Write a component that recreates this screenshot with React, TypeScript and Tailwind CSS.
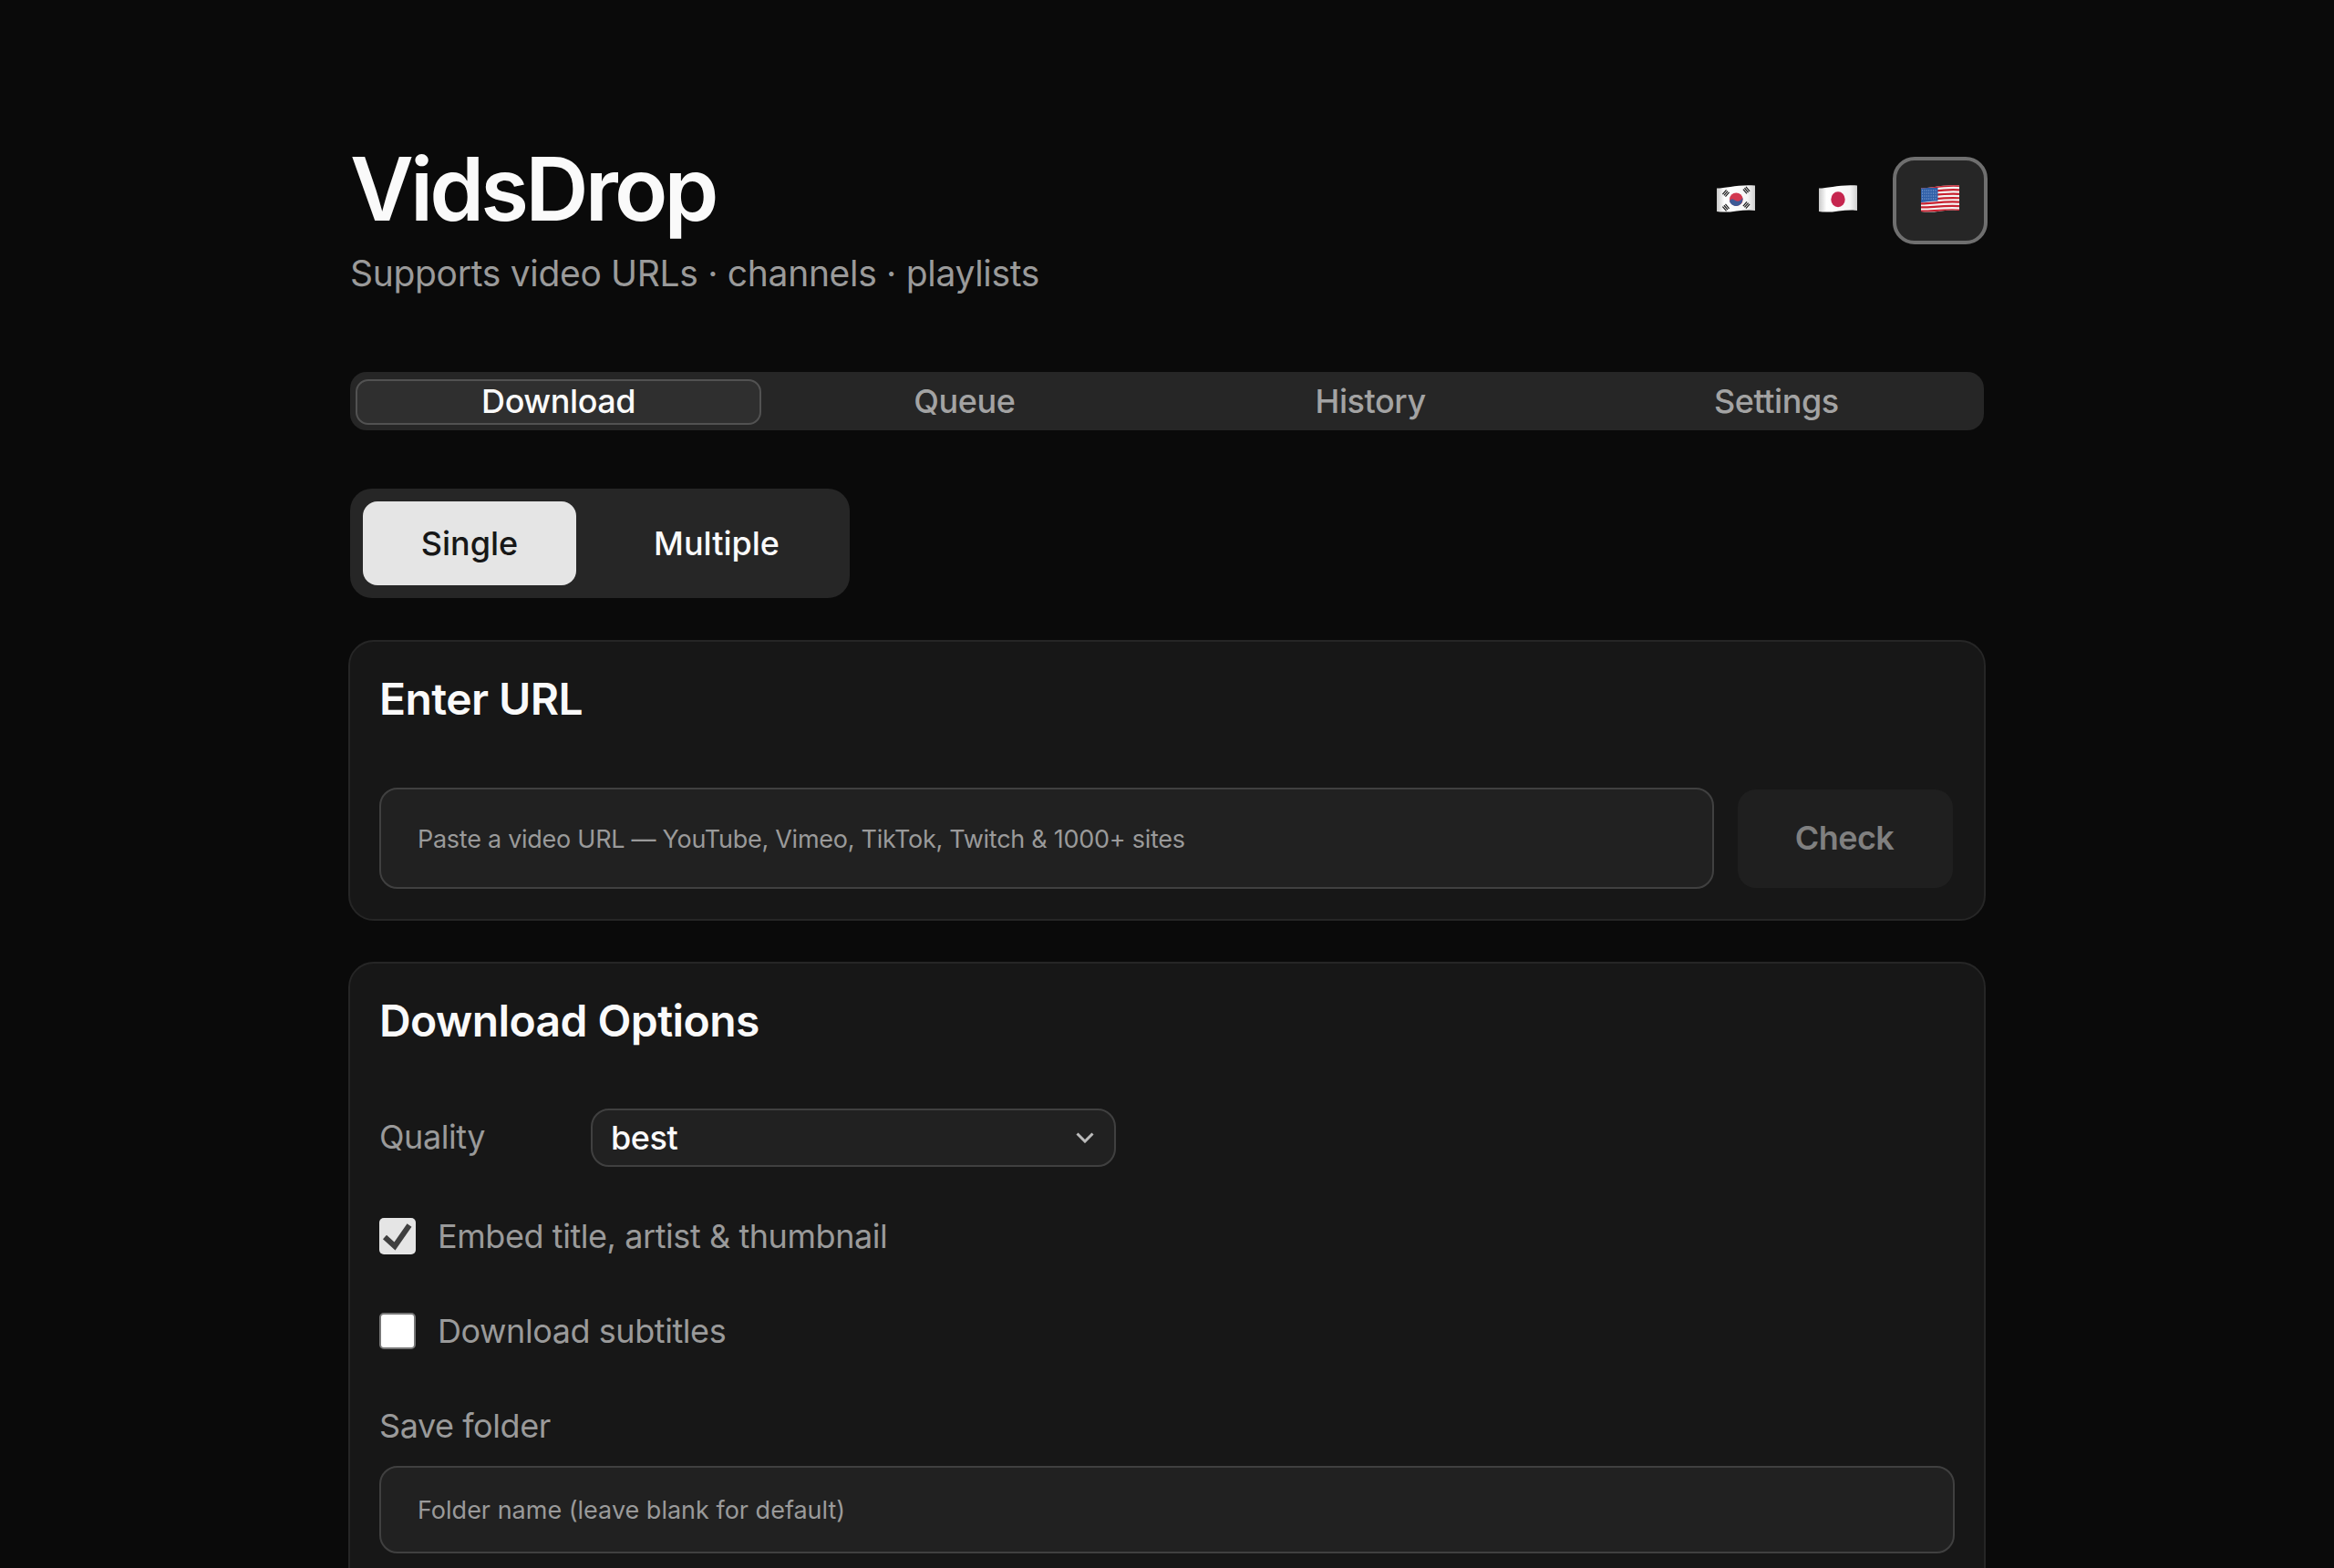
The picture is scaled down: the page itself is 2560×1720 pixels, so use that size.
import { useId } from 'react'

const wave = 'M0 3.5C10 3.5 24-1 42 0.5V28C30 25.5 14 31.5 0 29Z'

function Trigram({ x, y, angle }: { x: number; y: number; angle: number }) {
  return <path transform={`translate(${x} ${y}) rotate(${angle})`} d="M-3.2-2H3.2M-3.2 0H3.2M-3.2 2H3.2" />
}

function KoreaFlag() {
  const id = useId()
  return (
    <svg className="mb-[3px]" width="42" height="31" viewBox="0 0 42 31">
      <defs>
        <linearGradient id={id} x1="0" x2="1" y1="0" y2="0">
          <stop offset="0" stopColor="#c9c9c9" />
          <stop offset="0.2" stopColor="#ffffff" />
          <stop offset="0.8" stopColor="#f6f6f6" />
          <stop offset="1" stopColor="#cfcfcf" />
        </linearGradient>
      </defs>
      <path d={wave} fill={`url(#${id})`} />
      <circle cx="21.3" cy="15.7" r="7.3" fill="#d2384f" />
      <path d="M14 17.5C15.5 14.5 18.5 15.5 20.5 17C23 18.8 26.5 17.5 28.4 14C29 18.5 26 23 21.3 23C17.8 23 14.8 20.5 14 17.5Z" fill="#3d5a96" />
      <g stroke="#1c1c1c" strokeWidth="1.2" fill="none">
        <Trigram x={10} y={9} angle={-50} />
        <Trigram x={32.5} y={5.7} angle={50} />
        <Trigram x={10} y={24.7} angle={50} />
        <Trigram x={32.5} y={22} angle={-50} />
      </g>
    </svg>
  )
}

function JapanFlag() {
  const id = useId()
  return (
    <svg className="mb-[3px]" width="42" height="31" viewBox="0 0 42 31">
      <defs>
        <linearGradient id={id} x1="0" x2="1" y1="0" y2="0">
          <stop offset="0" stopColor="#c9c9c9" />
          <stop offset="0.2" stopColor="#ffffff" />
          <stop offset="0.8" stopColor="#f6f6f6" />
          <stop offset="1" stopColor="#cfcfcf" />
        </linearGradient>
      </defs>
      <path d={wave} fill={`url(#${id})`} />
      <ellipse cx="21" cy="15.7" rx="7.7" ry="8.5" fill="#c6264f" />
    </svg>
  )
}

function UsFlag() {
  const id = useId()
  const lerp = (a: number, b: number, t: number) => a + (b - a) * t
  const stripes = [0, 1, 2, 3, 4, 5, 6].map((i) => {
    const t = i / 6
    return `M0 ${lerp(4, 28.5, t)}C10 ${lerp(4, 29, t)} 24 ${lerp(-0.5, 26.5, t)} 42 ${lerp(1, 27.5, t)}`
  })
  return (
    <svg className="mb-[3px]" width="42" height="31" viewBox="0 0 42 31">
      <defs>
        <clipPath id={id}>
          <path d={wave} />
        </clipPath>
      </defs>
      <g clipPath={`url(#${id})`}>
        <rect width="42" height="31" fill="#f4f4f4" />
        {stripes.map((d) => (
          <path key={d} d={d} stroke="#c8202f" strokeWidth="2.2" fill="none" />
        ))}
        <path d="M0 3H18.5V17.5C12 17 6 18.5 0 19Z" fill="#2f5fa8" />
        <path d="M1 6H18M1 9H18M1 12H18M1 15H18" stroke="#a9c0e4" strokeWidth="0.9" strokeDasharray="1 1.4" />
      </g>
    </svg>
  )
}

const tabs = ['Download', 'Queue', 'History', 'Settings']

export default function App() {
  return (
    <div className="h-[1720px] overflow-hidden bg-[#0a0a0a] font-['Inter',sans-serif]">
      <div className="mx-auto w-[1796px] pt-[146px]">
        <div className="flex justify-between pl-[2px]">
          <div>
            <h1 className="-mt-[2px] text-[96px] leading-[126px] font-semibold tracking-[-0.04em] text-[#fafafa]">VidsDrop</h1>
            <p className="mt-[6px] text-[39px] leading-[48px] tracking-[-0.008em] text-[#9a9a9a]">Supports video URLs · channels · playlists</p>
          </div>
          <div className="mt-[26px] -mr-[2px] flex h-[96px] gap-2">
            <button className="flex w-[104px] items-center justify-center rounded-3xl border-4 border-transparent">
              <KoreaFlag />
            </button>
            <button className="flex w-[104px] items-center justify-center rounded-3xl border-4 border-transparent">
              <JapanFlag />
            </button>
            <button className="flex w-[104px] items-center justify-center rounded-3xl border-4 border-[#6f6f6f] bg-[#262626]">
              <UsFlag />
            </button>
          </div>
        </div>

        <div className="mx-[2px] mt-[84px] grid h-[64px] grid-cols-4 items-start rounded-[18px] bg-[#262626] pt-[8px] pr-[5px] pl-[6px]">
          {tabs.map((t, i) => (
            <div
              key={t}
              className={
                i === 0
                  ? 'flex h-[50px] items-center justify-center rounded-[14px] border-2 border-[#525252] bg-[#2f2f2f] pb-[2px] text-[36px] leading-none font-medium tracking-[-0.012em] text-[#fafafa]'
                  : 'flex h-[50px] items-center justify-center pb-[2px] text-[36px] leading-none font-medium tracking-[-0.012em] text-[#a3a3a3]'
              }
            >
              {t}
            </div>
          ))}
        </div>

        <div className="mx-[2px] mt-[64px] flex h-[120px] w-[548px] items-center gap-[14px] rounded-3xl bg-[#262626] pr-[6px] pl-[14px]">
          <div className="flex h-[92px] w-[234px] items-center justify-center rounded-2xl bg-[#e5e5e5] pb-[1px] text-[36px] font-medium text-[#171717]">Single</div>
          <div className="flex h-[92px] flex-1 items-center justify-center pb-[1px] text-[36px] font-medium text-[#fafafa]">Multiple</div>
        </div>

        <section className="mt-[46px] h-[308px] rounded-[28px] border-2 border-[#262626] bg-[#171717] pt-[31px] pr-[34px] pl-[32px]">
          <h2 className="text-[48px] leading-[64px] font-semibold tracking-[-0.012em] text-[#fafafa]">Enter URL</h2>
          <div className="mt-[65px] flex items-center gap-[26px]">
            <input
              readOnly
              placeholder="Paste a video URL — YouTube, Vimeo, TikTok, Twitch & 1000+ sites"
              className="h-[111px] flex-1 rounded-[20px] border-2 border-[#404040] bg-[#212121] px-[40px] pt-[2px] text-[27px] tracking-[-0.01em] outline-none placeholder:text-[#9a9a9a]"
            />
            <button className="h-[108px] w-[236px] rounded-[20px] bg-[#1f1f1f] pr-[2px] pb-[2px] text-[36px] font-semibold tracking-[-0.015em] text-[#808080]">Check</button>
          </div>
        </section>

        <section className="mt-[45px] h-[900px] rounded-[28px] border-2 border-[#262626] bg-[#171717] pt-[31px] pr-[34px] pl-[32px]">
          <h2 className="text-[48px] leading-[64px] font-semibold tracking-[-0.012em] text-[#fafafa]">Download Options</h2>

          <div className="mt-[64px] flex items-center">
            <span className="w-[232px] pb-[2px] text-[36px] tracking-[-0.012em] text-[#9a9a9a]">Quality</span>
            <div className="flex h-[64px] w-[576px] items-center justify-between rounded-[20px] border-2 border-[#404040] bg-[#212121] pr-[22px] pl-[20px] text-[36px] font-medium tracking-[-0.012em] text-[#fafafa]">
              best
              <svg width="20" height="12" viewBox="0 0 20 12" fill="none" stroke="#bbbbbb" strokeWidth="3">
                <path d="M1.5 1.5L10 10L18.5 1.5" />
              </svg>
            </div>
          </div>

          <label className="mt-[56px] flex h-[40px] items-center gap-[24px] text-[36px] tracking-[-0.012em] text-[#9a9a9a]">
            <span className="flex h-[40px] w-[40px] items-center justify-center rounded-[5px] bg-[#e5e5e5]">
              <svg width="40" height="40" viewBox="0 0 40 40" fill="none" stroke="#3f3f3f" strokeWidth="6">
                <path d="M6 21L17 31L33 8" />
              </svg>
            </span>
            Embed title, artist &amp; thumbnail
          </label>

          <label className="mt-[64px] flex h-[40px] items-center gap-[24px] text-[36px] tracking-[-0.012em] text-[#9a9a9a]">
            <span className="h-[40px] w-[40px] rounded-[5px] border-2 border-[#767676] bg-white" />
            Download subtitles
          </label>

          <div className="mt-[60px] text-[36px] leading-[48px] tracking-[-0.012em] text-[#9a9a9a]">Save folder</div>
          <input
            readOnly
            placeholder="Folder name (leave blank for default)"
            className="mt-[20px] h-[96px] w-[calc(100%+2px)] rounded-[20px] border-2 border-[#404040] bg-[#212121] px-[40px] text-[27px] outline-none placeholder:text-[#9a9a9a]"
          />
        </section>
      </div>
    </div>
  )
}
